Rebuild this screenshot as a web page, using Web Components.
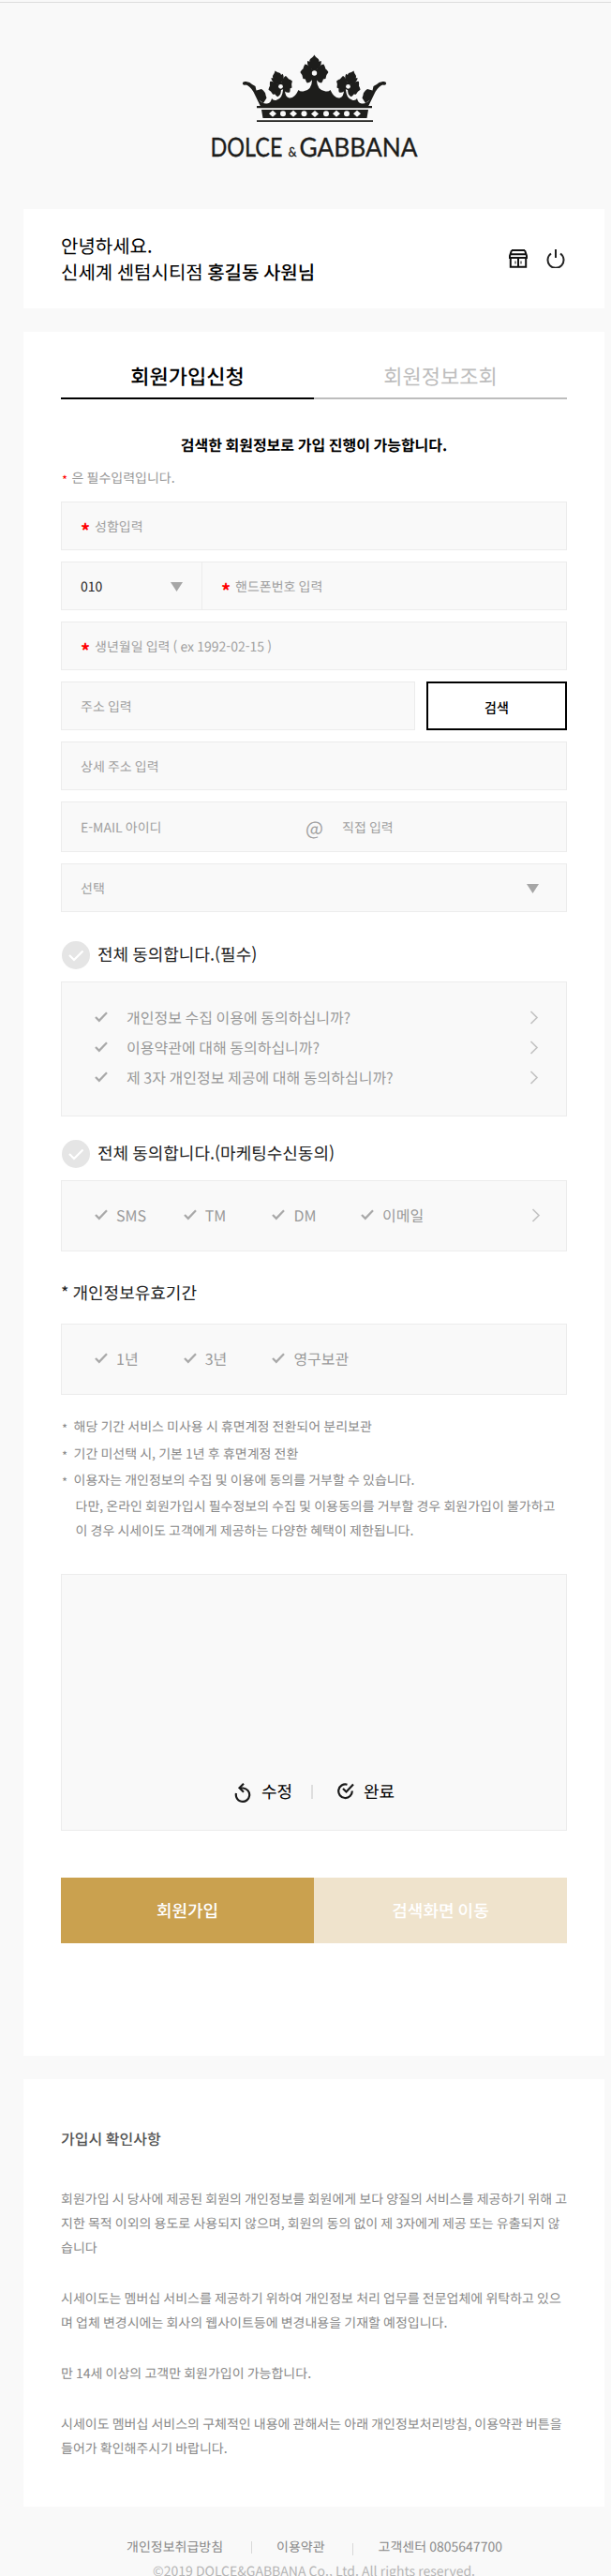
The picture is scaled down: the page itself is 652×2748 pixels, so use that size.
<!DOCTYPE html>
<html lang="ko">
<head>
<meta charset="utf-8">
<title>회원가입신청</title>
<style>
html,body{margin:0;padding:0}
body{width:652px;height:2748px;overflow:hidden;background:#f9f9f9;font-family:"Noto Sans CJK KR","Noto Sans",sans-serif;color:#000;text-rendering:geometricPrecision}
</style>
</head>
<body>
<join-page></join-page>
<script>
const define=(name,css,html)=>customElements.define(name,class extends HTMLElement{
  constructor(){super();const r=this.attachShadow({mode:'open'});
    r.innerHTML='<style>:host,*{word-spacing:-.055em}*{box-sizing:border-box}'+css+'</style>'+html;}
});

define('brand-logo',`
:host{display:flex;flex-direction:column;align-items:center;padding-top:55px;height:220px;box-sizing:border-box;margin-left:19px;width:634px}
svg{display:block;overflow:visible}`,
`<svg width="222" height="118" viewBox="225 58 222 118" fill="#1d1d1b">
<defs>
<g id="fl"><path transform="scale(1.120 1)" d="M0 -3C-4 -4-7.300-8-6.500-13L-4.500-12.300C-5-14.500-3.500-15.500-2.200-16.500Q-1-17.500 0-19.500Q1-17.500 2.200-16.500C3.500-15.500 5-14.500 4.500-12.300L6.500-13C7.300-8 4-4 0-3Z"/>
<path id="pt" d="M-1 -2C-3.500-5-6.500-9.500-10-9.500Q-11-8-12-4.500L-13-3.800Q-14.500-2-15-1Q-14.500 0-13 2L-12 6L-9.500 6.500C-9 8.500-8.500 9.500-7.500 10.500Q-2 9.500-.8 3Z"/>
<use href="#pt" transform="scale(-1 1)"/>
<circle r="4.500"/></g>
<g id="half">
<path d="M278 113.500L270.500 98Q266 91 262.500 90.500Q259 91.500 258.800 89Q259 86.500 262.500 87Q267 87.500 269 90L272.500 92L273.500 96.500L279 95Q283.500 98 283.500 101.500L284.500 104.500L281 110L276.500 106.500Q280 111 285 110.500Q289 110 290 105Q292 108 295.500 106.500Q301 105.500 302 96H304Q304 103 308.500 104.500Q314 105.500 318.500 96Q321 98.500 325 97Q332.500 95.500 333 86V80H336V114.500H278Z"/>
</g></defs>
<use href="#fl" transform="translate(335.400 78)"/>
<use href="#fl" transform="translate(299.500 92) rotate(-20) scale(.9)"/>
<use href="#fl" transform="translate(371.500 92) rotate(20) scale(.9)"/>
<use href="#half"/><use href="#half" transform="matrix(-1 0 0 1 671 0)"/>
<path d="M274 113H397V115.200H274ZM279 117H393L391.500 126H280.500ZM274 128.200H398V130H274Z"/>
<g fill="#f9f9f9"><circle cx="335.500" cy="78" r="2.700"/><circle cx="299.500" cy="92.300" r="2.400"/><circle cx="371.500" cy="92.300" r="2.400"/>
<path d="M287 121.300L291 117.800 295 121.300 291 124.800ZM309 121.300L313 117.800 317 121.300 313 124.800ZM332 121.500L336 118 340 121.500 336 125ZM355 121.300L359 117.800 363 121.300 359 124.800ZM377 121.300L381 117.800 385 121.300 381 124.800Z"/>
<circle cx="302" cy="121.300" r="3"/><circle cx="324.500" cy="121.300" r="3"/><circle cx="348" cy="121.300" r="3"/><circle cx="370" cy="121.300" r="3"/></g>
<g font-family="Lato,sans-serif" font-size="28" stroke="#1d1d1b" stroke-width=".350"><text x="224.500" y="166.800" textLength="77" lengthAdjust="spacingAndGlyphs">DOLCE</text><text x="307.500" y="166.800" font-size="14" textLength="9" lengthAdjust="spacingAndGlyphs">&amp;</text><text x="319.500" y="166.800" textLength="126" lengthAdjust="spacingAndGlyphs">GABBANA</text></g>
</svg>`);

define('ui-panel',`:host{display:block;box-sizing:border-box;width:620px;margin-left:25px;background:#fff;padding:0 40px}`,'<slot></slot>');

define('user-greeting',`
:host{display:flex;justify-content:space-between;align-items:center;height:106px}
p{margin:0;font-size:20px;line-height:28px}
b{font-weight:500}
div{display:flex;gap:20px;margin-right:2px}svg{display:block}`,
`<p>안녕하세요.<br>신세계 센텀시티점 <b>홍길동 사원님</b></p>
<div><svg width="20" height="20" viewBox="0 0 20 20" fill="none" stroke="#111" stroke-width="2"><path d="M3 1H17M3 1L1 7V9H19V7L17 1M2 5.200H18" stroke-width="2"/><path d="M1.800 9V18.800H18.200V9M10 9V19"/><path d="M7 12.500V15.500M13 12.500V15.500" stroke-width="1"/></svg>
<svg width="20" height="20" viewBox="0 0 20 20" fill="none" stroke="#222" stroke-width="2"><path d="M10 0V9M5 4.500A8.500 8.500 0 1 0 15 4.500"/></svg></div>`);

define('ui-tabs',`
:host{display:flex;height:72px}
div{flex:1;display:flex;justify-content:center;align-items:center;padding-top:23px;font-size:22px;font-weight:500;border-bottom:2px solid #000}
div+div{color:#bdbdbd;border-color:#bdbdbd;font-weight:400}`,
'<div>회원가입신청</div><div>회원정보조회</div>');

define('ui-field',`
:host{display:flex;align-items:center;box-sizing:border-box;height:52px;border:1px solid #ececec;background:#f9f9f9;padding:1px 20px 0;font-size:14px;line-height:20px;color:#a0a0a0}
:host([tall]){height:54px}
:host([half]){border-left:0}
i{display:none;font:normal 700 20px/20px "Noto Sans CJK KR";color:red;width:15px;height:12px}
:host([required]) i{display:block}
svg{display:none;margin-left:auto}
:host([select]) svg{display:block}`,
'<i>*</i><slot></slot><svg width="13" height="10"><path d="M0 0H13L6.500 10Z" fill="#a6a6a6"/></svg>');

define('ui-check',`:host{display:flex;align-items:center}svg{display:block;margin-right:var(--gap,9px)}`,
'<svg width="14" height="12" viewBox="0 0 14 12"><path d="M1 6L4.800 9.800L13 1.300" fill="none" stroke="#a9a9a9" stroke-width="2.300"/></svg><slot></slot>');

define('ui-chevron',':host{display:block;margin-left:auto}svg{display:block}',
'<svg width="10" height="15" viewBox="0 0 10 15"><path d="M1.500 1L8 7.500L1.500 14" fill="none" stroke="#c4c4c4" stroke-width="1.700"/></svg>');

define('agree-title',`:host{display:flex;align-items:center;height:30px;font-size:18px;color:#222;padding-left:1px}svg{margin-right:8px}span{position:relative;top:-1px}`,
'<svg width="30" height="30" viewBox="0 0 30 30"><circle cx="15" cy="15" r="15" fill="#e5e5e5"/><path d="M8 15L13 20L22.500 10.500" fill="none" stroke="#fff" stroke-width="2.200"/></svg><span><slot></slot></span>');

define('ui-box',`:host{display:block;box-sizing:border-box;border:1px solid #ececec;background:#f9f9f9;font-size:16px;color:#999}`,'<slot></slot>');

define('sign-pad',`
:host{display:flex;box-sizing:border-box;height:274px;border:1px solid #ececec;background:#f9f9f9;align-items:flex-end;justify-content:center;padding:0 0 27px 1px}
div{display:flex;align-items:center;height:28px;font-size:18px;line-height:28px}
hr{width:2px;height:15px;background:#dedede;border:0;margin:0 26px 0 20px}svg{margin-right:11px}.b svg{margin-right:10px}`,
`<div><svg style="margin-top:3px" width="18" height="21" viewBox="0 0 18 21" fill="none" stroke="#1a1a1a" stroke-width="2.200"><path d="M2 11A7.200 7.200 0 1 0 9.500 5.500H6"/><path d="M10 .8L5.500 5.300L10 9.800"/></svg>수정</div><hr style="margin-bottom:6px">
<div class="b"><svg width="18" height="18" viewBox="0 0 18 18" fill="none" stroke="#1a1a1a" stroke-width="2.200"><path d="M10.500 1.700A7.300 7.300 0 1 0 15.800 8.500"/><path d="M6 6L9.500 9.500L17 1.500"/></svg>완료</div>`);

define('action-bar',`
:host{display:flex;height:70px;color:#fff;font-size:18px;font-weight:500}
div{flex:1;display:flex;align-items:center;justify-content:center;background:#caa14f}
div+div{background:#efe3cc}`,'<div>회원가입</div><div>검색화면 이동</div>');

define('page-footer',`
:host{display:block;font-size:14px;color:#8a8a8a;padding-top:29px}
nav{display:flex;align-items:center;height:28px;padding-left:135px;white-space:nowrap}
i{width:1px;height:13px;background:#d8d8d8;margin:0 26px 0 30px}
i.l{position:relative;top:2px;margin:0 27px 0 29px}
p{margin:0;padding-left:18px;text-align:center;line-height:24px;color:#b5b5b5}`,
'<nav>개인정보취급방침<i></i>이용약관<i class="l"></i>고객센터 0805647700</nav><p>©2019 DOLCE&amp;GABBANA Co., Ltd. All rights reserved.</p>');

define('join-page',`
:host{display:block;height:2748px;box-sizing:border-box;padding-top:2px}
header{border-top:1px solid #ddd;height:221px}
.greet{margin-bottom:25px}
.main{height:1839px;margin-bottom:25px}
.notice{margin:0;padding-top:36px;height:74px;line-height:24px;text-align:center;font-size:16px;font-weight:700}
.req{margin:0;padding-left:1px;height:35px;line-height:20px;font-size:14px;color:#999}
.req i{font:normal 13px/20px "Noto Sans CJK KR";color:red;display:inline-block;width:10.500px;position:relative;top:2px}
.form{display:flex;flex-direction:column;gap:12px}
.row{display:flex}
.row ui-field:last-child{flex:1}
button{font:500 14px "Noto Sans CJK KR",sans-serif;width:150px;height:52px;border:2px solid #000;background:#fff;margin-left:12px;padding:1px 0 0;border-radius:0;color:#000}
.at{font-size:20px;width:39px;flex:none}
.list{height:144px;padding:21px 29px 0 35px}
.list div{display:flex;align-items:center;height:32px}
.list ui-check{--gap:20px}
.set{display:flex;align-items:center;height:76px;padding:0 27px 2px 35px}
.set ui-check{width:94.700px;white-space:nowrap}
h3{margin:0;font-weight:400;font-size:18px;line-height:28px;color:#222}
ul{list-style:none;margin:0;height:191px;padding:20px 0 0 1px;font-size:14px;color:#8a8a8a}
li{display:flex;height:28.500px;line-height:28px;white-space:nowrap}
li i{font-style:normal;font-size:13px;width:12.500px;position:relative;top:2px}
ul p{margin:0 0 0 14.500px;line-height:26px;white-space:nowrap}
.info{height:456px;padding-top:50px}
.info h4{margin:0 0 39px 0;font-size:16px;line-height:26px;font-weight:500;color:#555}
.info p{margin:0 0 28px 0;font-size:14px;line-height:26px;color:#8a8a8a;white-space:nowrap}`,
`<header><brand-logo></brand-logo></header>
<ui-panel class="greet"><user-greeting></user-greeting></ui-panel>
<ui-panel class="main">
<ui-tabs></ui-tabs>
<p class="notice">검색한 회원정보로 가입 진행이 가능합니다.</p>
<p class="req"><i>*</i>은 필수입력입니다.</p>
<div class="form">
<ui-field required>성함입력</ui-field>
<div class="row"><ui-field select style="width:151px;color:#222">010</ui-field><ui-field half required>핸드폰번호 입력</ui-field></div>
<ui-field required style="word-spacing:-1.6px">생년월일 입력 ( ex 1992-02-15 )</ui-field>
<div class="row"><ui-field style="flex:1">주소 입력</ui-field><button>검색</button></div>
<ui-field>상세 주소 입력</ui-field>
<ui-field tall><span style="width:240px">E-MAIL 아이디</span><span class="at">@</span><span>직접 입력</span></ui-field>
<ui-field select style="padding-right:29px">선택</ui-field>
</div>
<agree-title style="margin-top:31px">전체 동의합니다.(필수)</agree-title>
<ui-box class="list" style="margin-top:13px">
<div><ui-check>개인정보 수집 이용에 동의하십니까?</ui-check><ui-chevron></ui-chevron></div>
<div><ui-check>이용약관에 대해 동의하십니까?</ui-check><ui-chevron></ui-chevron></div>
<div><ui-check>제 3자 개인정보 제공에 대해 동의하십니까?</ui-check><ui-chevron></ui-chevron></div>
</ui-box>
<agree-title style="margin-top:25px">전체 동의합니다.(마케팅수신동의)</agree-title>
<ui-box class="set" style="margin-top:13px"><ui-check>SMS</ui-check><ui-check>TM</ui-check><ui-check>DM</ui-check><ui-check>이메일</ui-check><ui-chevron></ui-chevron></ui-box>
<h3 style="margin-top:30px">* 개인정보유효기간</h3>
<ui-box class="set" style="margin-top:19px"><ui-check>1년</ui-check><ui-check>3년</ui-check><ui-check>영구보관</ui-check></ui-box>
<ul>
<li><i>*</i>해당 기간 서비스 미사용 시 휴면계정 전환되어 분리보관</li>
<li><i>*</i>기간 미선택 시, 기본 1년 후 휴면계정 전환</li>
<li><i>*</i>이용자는 개인정보의 수집 및 이용에 동의를 거부할 수 있습니다.</li>
<p>다만, 온라인 회원가입시 필수정보의 수집 및 이용동의를 거부할 경우 회원가입이 불가하고<br>이 경우 시세이도 고객에게 제공하는 다양한 혜택이 제한됩니다.</p>
</ul>
<sign-pad></sign-pad>
<action-bar style="margin-top:50px"></action-bar>
</ui-panel>
<ui-panel class="info">
<h4>가입시 확인사항</h4>
<p>회원가입 시 당사에 제공된 회원의 개인정보를 회원에게 보다 양질의 서비스를 제공하기 위해 고<br>지한 목적 이외의 용도로 사용되지 않으며, 회원의 동의 없이 제 3자에게 제공 또는 유출되지 않<br>습니다</p>
<p>시세이도는 멤버십 서비스를 제공하기 위하여 개인정보 처리 업무를 전문업체에 위탁하고 있으<br>며 업체 변경시에는 회사의 웹사이트등에 변경내용을 기재할 예정입니다.</p>
<p>만 14세 이상의 고객만 회원가입이 가능합니다.</p>
<p>시세이도 멤버십 서비스의 구체적인 내용에 관해서는 아래 개인정보처리방침, 이용약관 버튼을<br>들어가 확인해주시기 바랍니다.</p>
</ui-panel>
<page-footer></page-footer>`);
</script>
</body>
</html>
